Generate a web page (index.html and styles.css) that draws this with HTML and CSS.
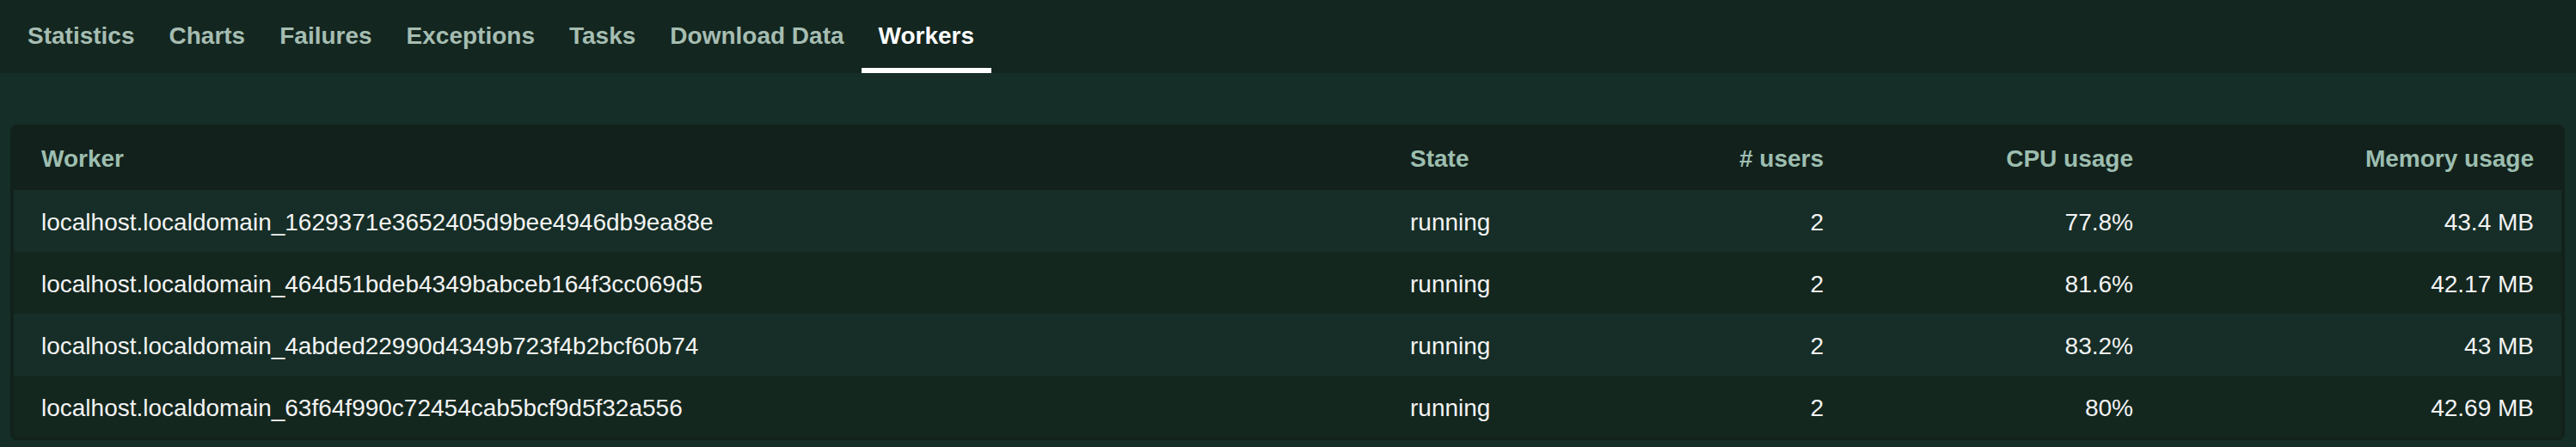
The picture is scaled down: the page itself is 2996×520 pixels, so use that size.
FILE: index.html
```html
<!DOCTYPE html>
<html>
<head>
<meta charset="utf-8">
<link rel="stylesheet" href="styles.css">
</head>
<body>
<nav class="tabs">
  <a class="tab">Statistics</a>
  <a class="tab">Charts</a>
  <a class="tab">Failures</a>
  <a class="tab">Exceptions</a>
  <a class="tab">Tasks</a>
  <a class="tab">Download Data</a>
  <a class="tab active">Workers</a>
</nav>
<main class="content">
  <div class="card">
    <table class="workers">
      <colgroup>
        <col class="c-worker"><col class="c-state"><col class="c-users"><col class="c-cpu"><col class="c-mem">
      </colgroup>
      <thead>
        <tr>
          <th>Worker</th>
          <th>State</th>
          <th class="num"># users</th>
          <th class="num">CPU usage</th>
          <th class="num">Memory usage</th>
        </tr>
      </thead>
      <tbody>
        <tr>
          <td>localhost.localdomain_1629371e3652405d9bee4946db9ea88e</td>
          <td>running</td>
          <td class="num">2</td>
          <td class="num">77.8%</td>
          <td class="num">43.4 MB</td>
        </tr>
        <tr>
          <td>localhost.localdomain_464d51bdeb4349babceb164f3cc069d5</td>
          <td>running</td>
          <td class="num">2</td>
          <td class="num">81.6%</td>
          <td class="num">42.17 MB</td>
        </tr>
        <tr>
          <td>localhost.localdomain_4abded22990d4349b723f4b2bcf60b74</td>
          <td>running</td>
          <td class="num">2</td>
          <td class="num">83.2%</td>
          <td class="num">43 MB</td>
        </tr>
        <tr>
          <td>localhost.localdomain_63f64f990c72454cab5bcf9d5f32a556</td>
          <td>running</td>
          <td class="num">2</td>
          <td class="num">80%</td>
          <td class="num">42.69 MB</td>
        </tr>
      </tbody>
    </table>
  </div>
</main>
</body>
</html>
```

FILE: styles.css
```css
html, body {
  margin: 0;
  padding: 0;
}
body {
  background: #152e27;
  font-family: "Liberation Sans", Arial, sans-serif;
  width: 2996px;
  height: 520px;
  overflow: hidden;
}
.tabs {
  display: flex;
  background: #13261f;
  height: 85px;
  padding-left: 12px;
  box-sizing: border-box;
}
.tab {
  display: block;
  padding: 26px 20px 21px;
  line-height: 32px;
  font-size: 28px;
  font-weight: bold;
  color: #a6bdb2;
  border-bottom: 6px solid transparent;
  white-space: nowrap;
}
.tab.active {
  color: #ffffff;
  border-bottom-color: #ffffff;
}
.content {
  padding: 60px 13px 0 12px;
}
.card {
  background: #12211b;
  border-radius: 8px;
  padding: 0 4px 3px;
}
.workers {
  width: 100%;
  border-collapse: collapse;
  table-layout: fixed;
  font-size: 28px;
}
.c-worker { width: 1592px; }
.c-state { width: 272px; }
.c-users { width: 273px; }
.c-cpu { width: 360px; }
.c-mem { width: 466px; }
.workers th,
.workers td {
  padding: 4px 32px 0;
  text-align: left;
  line-height: 32px;
  white-space: nowrap;
}
.workers th {
  height: 72px;
  font-weight: bold;
  color: #9dbeb0;
  background: #12211b;
}
.workers td {
  height: 68px;
  color: #f3f3f3;
}
.workers tbody tr:nth-child(odd) {
  background: #162e27;
}
.workers tbody tr:nth-child(even) {
  background: #14271f;
}
.workers .num {
  text-align: right;
}
```
